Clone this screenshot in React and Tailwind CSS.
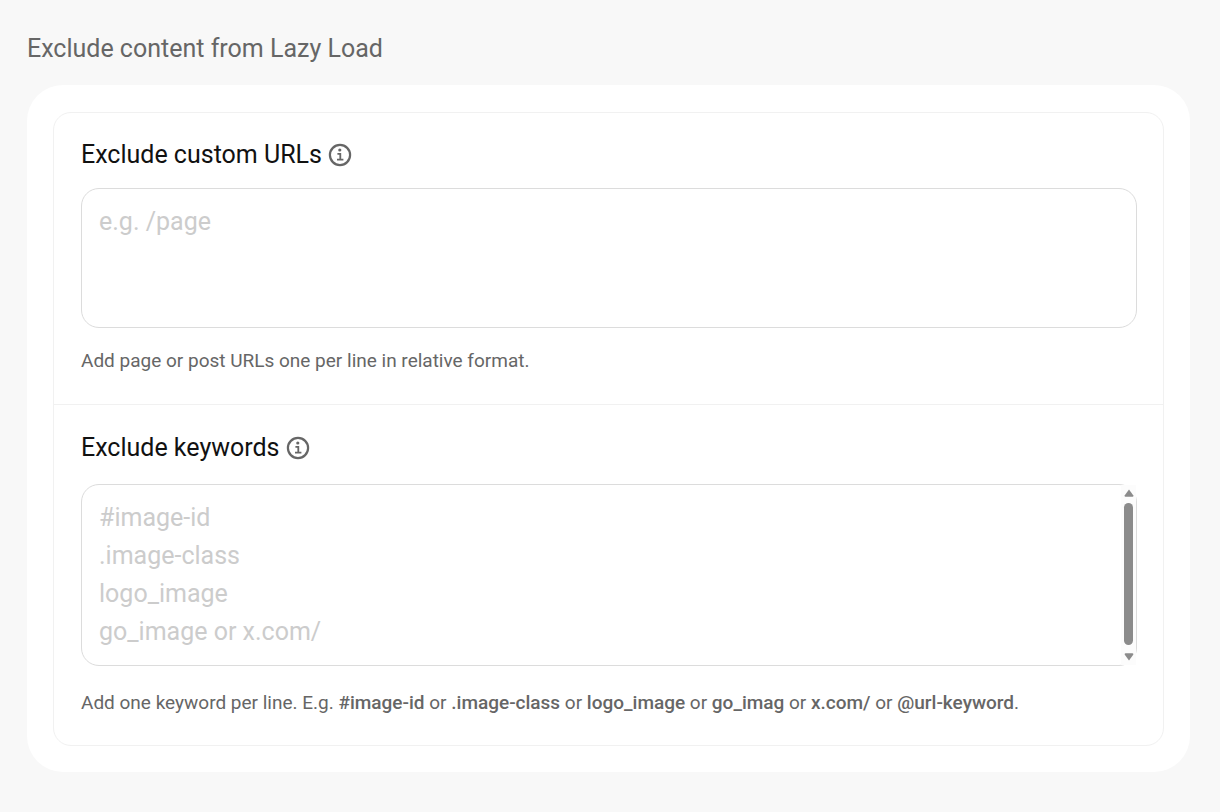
import React, { useState } from 'react';

const InfoIcon = () => (
  <svg width="24" height="24" viewBox="0 0 24 24" fill="none" aria-hidden="true">
    <circle cx="12" cy="12" r="10.1" stroke="#666" strokeWidth="2.2" />
    <circle cx="11.8" cy="7" r="1.6" fill="#666" />
    <path d="M9.4 10.8h2.9v5.6M9 16.6h6.4" stroke="#666" strokeWidth="1.8" />
  </svg>
);

const FieldTitle = ({ htmlFor, children }) => (
  <div className="flex h-8 items-center gap-1.5">
    <label htmlFor={htmlFor} className="text-[25px] leading-8 text-[#111]">{children}</label>
    <button type="button" aria-label="More info" className="cursor-pointer">
      <InfoIcon />
    </button>
  </div>
);

// textarea scrollbar, drawn over the right edge
const ScrollTrack = () => (
  <div className="pointer-events-none absolute inset-y-px right-px flex w-[15px] flex-col items-center justify-between bg-[#fcfcfc] py-1">
    <svg width="10" height="8" viewBox="0 0 10 8" aria-hidden="true">
      <path d="M5 .5 9.2 6.2Q9.8 7.8 8.5 7.8h-7Q.2 7.8.8 6.2Z" fill="#8b8b8b" />
    </svg>
    <div className="mt-1.5 mb-2 w-[9px] flex-1 rounded-full bg-[#8b8b8b]" />
    <svg width="10" height="8" viewBox="0 0 10 8" aria-hidden="true">
      <path d="M5 7.5 9.2 1.8Q9.8.2 8.5.2h-7Q.2.2.8 1.8Z" fill="#8b8b8b" />
    </svg>
  </div>
);

const areaClass =
  'block w-full resize-none rounded-[18px] border border-[#dcdcdc] bg-white px-[17px] py-[14px] text-[25px] leading-[38px] text-[#111] outline-none placeholder:text-[#ccc] focus:border-[#aaa] [scrollbar-width:none]';

const helpClass = 'text-[19px] leading-[26px] text-[#666]';

const App = () => {
  const [urls, setUrls] = useState('');
  const [keywords, setKeywords] = useState('');

  return (
    <main className="min-h-screen bg-[#f8f8f8] pt-[33px] pr-[30px] pb-10 pl-[27px] font-['Roboto',sans-serif]">
      <h1 className="text-[25px] leading-8 text-[#666]">Exclude content from Lazy Load</h1>

      <div className="mt-5 rounded-[36px] bg-white px-[26px] pt-[27px] pb-[26px]">
        <div className="rounded-[18px] border border-[#f1f1f1]">
          <section className="border-b border-[#f1f1f1] pt-[26px] pr-[26px] pb-[30px] pl-[27px]">
            <FieldTitle htmlFor="exclude-urls">Exclude custom URLs</FieldTitle>
            <textarea
              id="exclude-urls"
              value={urls}
              onChange={(e) => setUrls(e.target.value)}
              placeholder="e.g. /page"
              className={`mt-[17px] h-[140px] ${areaClass}`}
            />
            <p className={`mt-5 ${helpClass}`}>
              Add page or post URLs one per line in relative format.
            </p>
          </section>

          <section className="pt-[27px] pr-[26px] pb-[29px] pl-[27px]">
            <FieldTitle htmlFor="exclude-keywords">Exclude keywords</FieldTitle>
            <div className="relative mt-5">
              <textarea
                id="exclude-keywords"
                value={keywords}
                onChange={(e) => setKeywords(e.target.value)}
                placeholder={'#image-id\n.image-class\nlogo_image\ngo_image or x.com/'}
                className={`h-[182px] ${areaClass}`}
              />
              <ScrollTrack />
            </div>
            <p className={`mt-6 ${helpClass}`}>
              Add one keyword per line. E.g. <b className="font-medium">#image-id</b> or{' '}
              <b className="font-medium">.image-class</b> or <b className="font-medium">logo_image</b> or{' '}
              <b className="font-medium">go_imag</b> or <b className="font-medium">x.com/</b> or{' '}
              <b className="font-medium">@url-keyword</b>.
            </p>
          </section>
        </div>
      </div>
    </main>
  );
};

export default App;
